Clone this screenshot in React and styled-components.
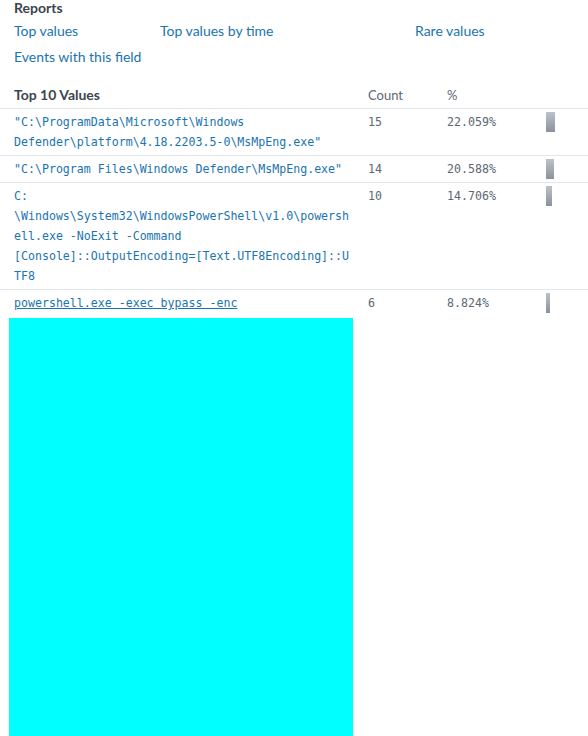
import styled, { createGlobalStyle } from 'styled-components';

const GlobalStyle = createGlobalStyle`
  body {
    margin: 0;
    background: #ffffff;
    font-family: Lato, "Liberation Sans", sans-serif;
  }
`;

// \u200b lets the path break after the drive letter, \u2060 keeps "=[" together
const rows = [
  {
    value: '"C:\\ProgramData\\Microsoft\\Windows Defender\\platform\\4.18.2203.5-0\\MsMpEng.exe"',
    count: 15,
    pct: 22.059,
  },
  {
    value: '"C:\\Program Files\\Windows Defender\\MsMpEng.exe"',
    count: 14,
    pct: 20.588,
  },
  {
    value:
      'C:\u200b\\Windows\\System32\\WindowsPowerShell\\v1.0\\powershell.exe -NoExit -Command [Console]::OutputEncoding=\u2060[Text.UTF8Encoding]::UTF8',
    count: 10,
    pct: 14.706,
  },
  {
    value: 'powershell.exe -exec bypass -enc',
    count: 6,
    pct: 8.824,
    hover: true,
  },
];

const App = () => {
  return (
    <Wrapper>
      <GlobalStyle />
      <Reports>
        <h4>Reports</h4>
        <div className='links'>
          <a>Top values</a>
          <a>Top values by time</a>
          <a>Rare values</a>
          <a>Events with this field</a>
        </div>
      </Reports>

      <Table>
        <HeadRow>
          <span className='value'>Top 10 Values</span>
          <span>Count</span>
          <span>%</span>
          <span />
        </HeadRow>
        {rows.map((row) => (
          <Row key={row.value}>
            <Value $hover={row.hover}>{row.value}</Value>
            <Mono>{row.count}</Mono>
            <Mono>{row.pct.toFixed(3)}%</Mono>
            <BarCell>
              <Bar style={{ width: `${row.pct * 0.4}px` }} />
            </BarCell>
          </Row>
        ))}
      </Table>

      <Highlight />
    </Wrapper>
  );
};

const Wrapper = styled.div`
  width: 588px;
  height: 736px;
  overflow: hidden;
`;

const Reports = styled.section`
  padding: 0 14px;
  h4 {
    margin: 0;
    font-size: 14px;
    line-height: 16px;
    font-weight: 700;
    color: #3c444d;
  }
  .links {
    display: grid;
    grid-template-columns: 146px 255px 1fr;
    row-gap: 6px;
    margin-top: 5px;
  }
  a {
    font-size: 14px;
    line-height: 20px;
    color: #1a74b0;
    cursor: pointer;
  }
`;

const Table = styled.div`
  margin-top: 18px;
`;

const grid = `
  display: grid;
  grid-template-columns: 368px 79px 99px 1fr;
  align-items: start;
`;

const HeadRow = styled.div`
  ${grid}
  padding-bottom: 3px;
  border-bottom: 1px solid #e1e6eb;
  font-size: 13px;
  line-height: 20px;
  color: #5c6773;
  .value {
    padding-left: 14px;
    font-size: 14px;
    font-weight: 700;
    color: #3c444d;
  }
`;

const Row = styled.div`
  ${grid}
  padding: 3px 0;
  border-bottom: 1px solid #e1e6eb;
  &:last-child {
    border-bottom: none;
  }
`;

const Mono = styled.span`
  font-family: "DejaVu Sans Mono", "Liberation Mono", monospace;
  font-size: 11.6px;
  line-height: 20px;
  color: #5c6773;
`;

const Value = styled(Mono)`
  padding: 0 14px;
  color: #1a74b0;
  overflow-wrap: break-word;
  min-width: 0;
  text-decoration: ${(p) => (p.$hover ? 'underline' : 'none')};
  cursor: pointer;
`;

const BarCell = styled.div`
  height: 20px;
`;

const Bar = styled.div`
  height: 20px;
  background: linear-gradient(180deg, #bcc2ca 0%, #8a929c 100%);
`;

const Highlight = styled.div`
  margin: 2px 0 0 9px;
  width: 344px;
  height: 418px;
  background: #00ffff;
`;

export default App;
